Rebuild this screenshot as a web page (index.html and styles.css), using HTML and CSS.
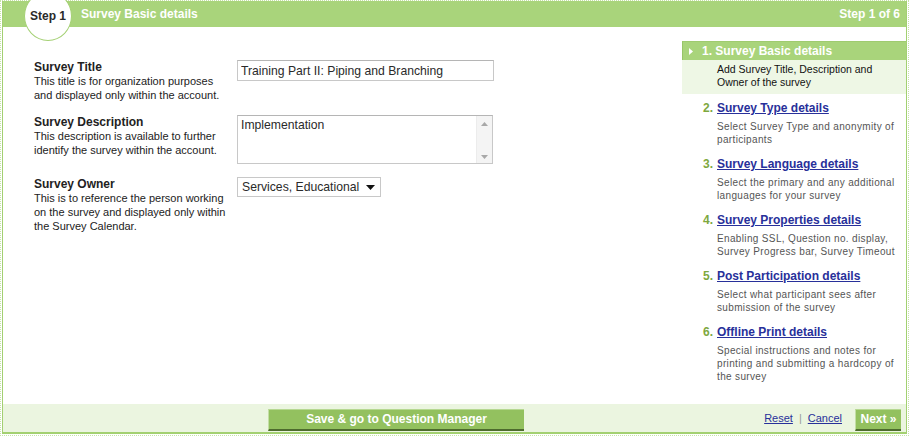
FILE: index.html
```html
<!DOCTYPE html>
<html>
<head>
<meta charset="utf-8">
<link rel="stylesheet" href="styles.css">
</head>
<body>
<div class="outer">
  <div class="frame">
    <div class="header">
      <div class="step-circle">Step 1</div>
      <div class="header-title">Survey Basic details</div>
      <div class="header-count">Step 1 of 6</div>
    </div>
    <div class="main">
      <div class="form">
        <div class="row">
          <div class="label">
            <div class="label-title">Survey Title</div>
            <div class="label-desc">This title is for organization purposes and displayed only within the account.</div>
          </div>
          <div class="field"><input class="text-input" type="text" value="Training Part II: Piping and Branching"></div>
        </div>
        <div class="row">
          <div class="label">
            <div class="label-title">Survey Description</div>
            <div class="label-desc">This description is available to further identify the survey within the account.</div>
          </div>
          <div class="field">
            <div class="textarea">
              <div class="textarea-text">Implementation</div>
              <div class="scrollbar">
                <svg width="7" height="4" viewBox="0 0 7 4"><path d="M0 4 L3.5 0 L7 4 Z" fill="#a8a8a8"/></svg>
                <svg width="7" height="4" viewBox="0 0 7 4"><path d="M0 0 L3.5 4 L7 0 Z" fill="#a8a8a8"/></svg>
              </div>
            </div>
          </div>
        </div>
        <div class="row">
          <div class="label">
            <div class="label-title">Survey Owner</div>
            <div class="label-desc">This is to reference the person working on the survey and displayed only within the Survey Calendar.</div>
          </div>
          <div class="field">
            <div class="select">
              <span>Services, Educational</span>
              <svg width="9" height="5" viewBox="0 0 9 5"><path d="M0 0 L9 0 L4.5 5 Z" fill="#111"/></svg>
            </div>
          </div>
        </div>
      </div>
      <div class="steps">
        <div class="active-head">
          <svg class="tri" width="4" height="7" viewBox="0 0 4 7"><path d="M0 0 L4 3.5 L0 7 Z" fill="#fff"/></svg>
          <span>1. Survey Basic details</span>
        </div>
        <div class="active-desc">Add Survey Title, Description and Owner of the survey</div>
        <div class="step-list">
          <div class="step">
            <div class="step-title"><span class="num">2.</span><a href="#">Survey Type details</a></div>
            <div class="step-desc">Select Survey Type and anonymity of participants</div>
          </div>
          <div class="step">
            <div class="step-title"><span class="num">3.</span><a href="#">Survey Language details</a></div>
            <div class="step-desc">Select the primary and any additional languages for your survey</div>
          </div>
          <div class="step">
            <div class="step-title"><span class="num">4.</span><a href="#">Survey Properties details</a></div>
            <div class="step-desc">Enabling SSL, Question no. display, Survey Progress bar, Survey Timeout</div>
          </div>
          <div class="step">
            <div class="step-title"><span class="num">5.</span><a href="#">Post Participation details</a></div>
            <div class="step-desc">Select what participant sees after submission of the survey</div>
          </div>
          <div class="step">
            <div class="step-title"><span class="num">6.</span><a href="#">Offline Print details</a></div>
            <div class="step-desc">Special instructions and notes for printing and submitting a hardcopy of the survey</div>
          </div>
        </div>
      </div>
    </div>
    <div class="footer">
      <button class="btn btn-save">Save &amp; go to Question Manager</button>
      <div class="footer-right">
        <a href="#">Reset</a><span class="sep">|</span><a href="#">Cancel</a>
        <button class="btn btn-next">Next »</button>
      </div>
    </div>
  </div>
</div>
</body>
</html>
```
FILE: styles.css
```css
html, body {
  margin: 0;
  padding: 0;
  background: #fff;
}
body {
  font-family: "Liberation Sans", Arial, sans-serif;
  color: #222;
  width: 909px;
  height: 436px;
  overflow: hidden;
}
.outer {
  width: 909px;
  height: 436px;
  box-sizing: border-box;
  border: 1px dotted #c6e3a8;
  padding: 0 1px 0 1px;
}
.frame {
  height: 433px;
  box-sizing: border-box;
  border-left: 1px solid #a3d071;
  border-right: 1px solid #a3d071;
  border-bottom: 2px solid #a3d071;
  display: flex;
  flex-direction: column;
}
.header {
  position: relative;
  height: 26px;
  background: #a9d47b;
  display: flex;
  align-items: center;
  padding-right: 6px;
  flex-shrink: 0;
}
.step-circle {
  position: absolute;
  left: 21px;
  top: -10px;
  width: 46px;
  height: 48px;
  border-radius: 50%;
  background: #fff;
  border: 1px solid #a4d074;
  display: flex;
  align-items: center;
  justify-content: center;
  box-sizing: content-box;
  font-size: 12px;
  font-weight: bold;
  color: #2a2a2a;
}
.header-title {
  margin-left: 78px;
  color: #fff;
  font-size: 12px;
  font-weight: bold;
  flex: 1;
}
.header-count {
  color: #fff;
  font-size: 12px;
  font-weight: bold;
}
.main {
  flex: 1;
  display: flex;
}
.form {
  flex: 1;
  padding: 33px 0 0 31px;
  display: flex;
  flex-direction: column;
  gap: 13px;
}
.row {
  display: flex;
}
.label {
  width: 203px;
  flex-shrink: 0;
}
.label-title {
  font-size: 12px;
  font-weight: bold;
  line-height: 14px;
  color: #222;
}
.label-desc {
  font-size: 11px;
  line-height: 14px;
  color: #222;
  width: 200px;
}
.text-input {
  width: 257px;
  height: 21px;
  box-sizing: border-box;
  border: 1px solid #c8c8c8;
  border-top-color: #b5b5b5;
  padding: 1px 4px 0 3px;
  margin: 0;
  font-family: "Liberation Sans", Arial, sans-serif;
  font-size: 12.2px;
  color: #2a2a2a;
  outline: none;
}
.textarea {
  width: 256px;
  height: 49px;
  box-sizing: border-box;
  border: 1px solid #c8c8c8;
  border-top-color: #b5b5b5;
  display: flex;
}
.textarea-text {
  flex: 1;
  font-size: 12.2px;
  color: #2a2a2a;
  padding: 1px 3px;
  line-height: 16px;
}
.scrollbar {
  width: 16px;
  background: #f4f4f4;
  border-left: 1px solid #ececec;
  display: flex;
  flex-direction: column;
  justify-content: space-between;
  align-items: center;
  padding: 6px 0 4px;
  box-sizing: border-box;
}
.select {
  width: 144px;
  height: 20px;
  box-sizing: border-box;
  border: 1px solid #c8c8c8;
  display: flex;
  align-items: center;
  justify-content: space-between;
  padding: 0 5px 0 4px;
  font-size: 12.2px;
  color: #2a2a2a;
}
.steps {
  width: 224px;
  flex-shrink: 0;
  padding-top: 14px;
}
.active-head {
  height: 19px;
  background: #a9d47b;
  border-left: 1px solid #98c568;
  border-top: 1px solid #9fcb6f;
  box-sizing: border-box;
  display: flex;
  align-items: center;
  color: #fff;
  font-size: 12px;
  font-weight: bold;
}
.tri {
  margin-left: 6px;
  margin-right: 9px;
}
.active-desc {
  background: #eef7e5;
  padding: 3px 8px 5px 35px;
  font-size: 10.5px;
  line-height: 13px;
  color: #111;
}
.step-list {
  padding: 6px 4px 0 21px;
}
.step {
  margin-bottom: 10px;
}
.step-title {
  display: flex;
  line-height: 16px;
  font-size: 12px;
}
.num {
  color: #7ea83e;
  font-weight: bold;
  width: 14px;
  flex-shrink: 0;
}
.step-title a {
  color: #28309a;
  font-weight: bold;
  text-decoration: underline;
}
.step-desc {
  margin-top: 4px;
  padding-left: 14px;
  font-size: 10px;
  letter-spacing: 0.35px;
  line-height: 13px;
  color: #555;
}
.footer {
  height: 28px;
  background: #ebf5e0;
  display: flex;
  align-items: center;
  padding: 0 5px 0 265px;
  flex-shrink: 0;
}
.btn {
  background: #93c15f;
  border: none;
  border-left: 1px solid #c3dea5;
  border-top: 1px solid #b6d891;
  border-bottom: 2px solid #4d6b2d;
  color: #fff;
  font-family: "Liberation Sans", Arial, sans-serif;
  font-size: 12px;
  font-weight: bold;
  height: 22px;
  padding: 0;
  margin-top: 3px;
}
.btn-save {
  width: 256px;
}
.footer-right {
  margin-left: auto;
  display: flex;
  align-items: center;
  font-size: 11px;
}
.footer-right a {
  color: #28309a;
  text-decoration: underline;
}
.sep {
  color: #999;
  margin: 0 6px;
}
.btn-next {
  width: 46px;
  margin-left: 13px;
}
```
